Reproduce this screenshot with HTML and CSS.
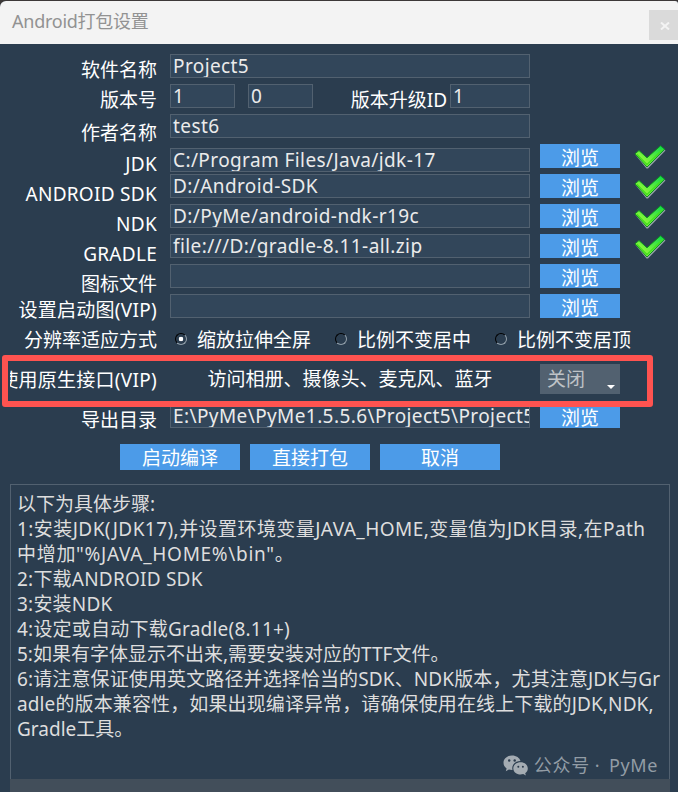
FILE: index.html
```html
<!DOCTYPE html>
<html lang="zh-CN">

<head>
    <meta charset="UTF-8">
    <meta name="viewport" content="width=device-width, initial-scale=1.0">
    <title>Android打包设置</title>
    <link rel="stylesheet" href="styles.css">
</head>

<body>
    <!-- 对勾图标 -->
    <svg class="defs" width="0" height="0">
        <defs>
            <linearGradient id="green" x1="0" y1="1" x2="1" y2="0">
                <stop offset="0.3" stop-color="#86f63c" />
                <stop offset="1" stop-color="#06d84e" />
            </linearGradient>
            <symbol id="check" viewBox="0 0 32 24">
                <path d="M1.5 10 5 7.5 13 14.5 27 2.5 31.5 5.5 14 23.5 12.5 23.5Z" fill="#93a0a4" />
                <path d="M1 8.8 5 5.5 13 12.8 26.5 0.8 30.7 4.2 13 22Z" fill="url(#green)" stroke="#0f8f22" stroke-width="1" />
                <path d="M2.8 9.2 13 19.5 28.8 4.3" fill="none" stroke="#45e01f" stroke-width="1.3" />
            </symbol>
        </defs>
    </svg>

    <div class="window">
        <div class="titlebar">
            <span class="title">Android打包设置</span>
            <button type="button" class="close" aria-label="关闭窗口">
                <svg width="10" height="8" viewBox="0 0 10 8">
                    <path d="M1 0.5 9 7.5M9 0.5 1 7.5" stroke="#f3f3f3" stroke-width="2" />
                </svg>
            </button>
        </div>

        <div class="form">
            <div class="row">
                <div class="label">软件名称</div>
                <div class="field">Project5</div>
            </div>
            <div class="row">
                <div class="label">版本号</div>
                <div class="field short">1</div>
                <div class="field short minor">0</div>
                <div class="label upgrade">版本升级ID</div>
                <div class="field code">1</div>
            </div>
            <div class="row">
                <div class="label low">作者名称</div>
                <div class="field">test6</div>
            </div>
            <div class="row">
                <div class="label lower wide">JDK</div>
                <div class="field down">C:/Program Files/Java/jdk-17</div>
                <button type="button" class="btn">浏览</button>
                <svg class="check"><use href="#check" /></svg>
            </div>
            <div class="row">
                <div class="label lower wide">ANDROID SDK</div>
                <div class="field">D:/Android-SDK</div>
                <button type="button" class="btn">浏览</button>
                <svg class="check"><use href="#check" /></svg>
            </div>
            <div class="row">
                <div class="label lower wide">NDK</div>
                <div class="field">D:/PyMe/android-ndk-r19c</div>
                <button type="button" class="btn">浏览</button>
                <svg class="check"><use href="#check" /></svg>
            </div>
            <div class="row">
                <div class="label lower wide">GRADLE</div>
                <div class="field">file:///D:/gradle-8.11-all.zip</div>
                <button type="button" class="btn">浏览</button>
                <svg class="check"><use href="#check" /></svg>
            </div>
            <div class="row">
                <div class="label lower">图标文件</div>
                <div class="field"></div>
                <button type="button" class="btn">浏览</button>
            </div>
            <div class="row">
                <div class="label wide">设置启动图(VIP)</div>
                <div class="field"></div>
                <button type="button" class="btn">浏览</button>
            </div>
            <div class="row">
                <div class="label">分辨率适应方式</div>
                <div class="radios">
                    <div class="radio"><i class="dot on"></i>缩放拉伸全屏</div>
                    <div class="radio"><i class="dot"></i>比例不变居中</div>
                    <div class="radio"><i class="dot"></i>比例不变居顶</div>
                </div>
            </div>
            <div class="row api">
                <div class="label wide">使用原生接口(VIP)</div>
                <div class="desc">访问相册、摄像头、麦克风、蓝牙</div>
                <div class="select">关闭<i class="arrow"></i></div>
                <div class="mark"></div>
            </div>
            <div class="row">
                <div class="label">导出目录</div>
                <div class="field">E:\PyMe\PyMe1.5.5.6\Project5\Project5</div>
                <button type="button" class="btn">浏览</button>
            </div>
        </div>

        <div class="actions">
            <button type="button" class="btn big">启动编译</button>
            <button type="button" class="btn big">直接打包</button>
            <button type="button" class="btn big">取消</button>
        </div>

        <div class="steps">
            <p>以下为具体步骤:</p>
            <p class="env">1:安装JDK(JDK17),并设置环境变量JAVA_HOME,变量值为JDK目录,在Path</p>
            <p class="path">中增加"%JAVA_HOME%\bin"。</p>
            <p class="latin">2:下载ANDROID SDK</p>
            <p class="latin">3:安装NDK</p>
            <p class="latin">4:设定或自动下载Gradle(8.11+)</p>
            <p>5:如果有字体显示不出来,需要安装对应的TTF文件。</p>
            <p class="long">6:请注意保证使用英文路径并选择恰当的SDK、NDK版本，尤其注意JDK与Gr</p>
            <p class="long">adle的版本兼容性，如果出现编译异常，请确保使用在线上下载的JDK,NDK,</p>
            <p>Gradle工具。</p>
            <div class="watermark">
                <svg width="26" height="21" viewBox="0 0 26 21">
                    <path d="M9 0.5C4 0.5 0.5 3.7 0.5 7.8c0 2.3 1.2 4.3 3.1 5.7l-0.8 2.7 3.1-1.6c1 0.3 2 0.4 3.1 0.4h0.5c-1.3-5 2.6-8.9 8-8.9C16.7 2.9 13.3 0.5 9 0.5z" fill="#a4acb3" />
                    <path d="M17.6 7.3c-4.2 0-7.3 2.8-7.3 6.1s3.1 6.1 7.3 6.1c0.9 0 1.8-0.1 2.6-0.4l2.7 1.4-0.7-2.3c1.6-1.2 2.6-2.9 2.6-4.8 0-3.3-3.1-6.1-7.2-6.1z" fill="#a4acb3" />
                    <g fill="#2b3b4c">
                        <circle cx="6.2" cy="5.5" r="1.2" />
                        <circle cx="11.7" cy="5.5" r="1.2" />
                        <circle cx="15.3" cy="11.7" r="1" />
                        <circle cx="19.9" cy="11.7" r="1" />
                    </g>
                </svg>
                <span class="account">公众号</span>
                <span class="sep">·</span>
                <span class="name">PyMe</span>
            </div>
        </div>
        <div class="bottom"></div>
    </div>
</body>

</html>
```

FILE: styles.css
```css
body {
    margin: 0;
    background-color: #3c3838;
    overflow: hidden;
    font-family: "Noto Sans", "Noto Sans CJK SC", sans-serif;
    font-size: 19px;
    line-height: 24px;
    color: #fff;
}

.defs {
    position: absolute;
}

.window {
    margin-top: 1px;
    height: 791px;
    background-color: #2b3d4f;
    border-radius: 6px 3px 0 0;
    overflow: hidden;
}

.titlebar {
    display: flex;
    justify-content: space-between;
    height: 43px;
    background-color: #f3f3f3;
}

.title {
    padding: 8px 0 0 12px;
    font-size: 18px;
    letter-spacing: -0.25px;
    color: #929292;
}

.close {
    width: 29px;
    height: 30px;
    margin-top: 9px;
    padding: 0 0 0 2px;
    border: none;
    background-color: #dadada;
}

.form {
    padding: 10px 0 0 10px;
}

.row {
    display: flex;
    align-items: flex-start;
    height: 30px;
    white-space: nowrap;
}

.label {
    display: flex;
    justify-content: flex-end;
    width: 147px;
    margin-right: 13px;
    padding-top: 4px;
    overflow: hidden;
}

.label.low {
    padding-top: 7px;
}

.label.lower {
    padding-top: 8px;
}

.label.wide {
    letter-spacing: 0.28px;
}

.label.upgrade {
    width: 134px;
    margin-right: 3px;
}

.field {
    box-sizing: border-box;
    width: 360px;
    height: 24px;
    padding-left: 2px;
    border: 1px solid #526170;
    background-color: #32465a;
    color: #ebebeb;
    letter-spacing: 0.4px;
    line-height: 22px;
    overflow: hidden;
}

.field.short {
    width: 65px;
}

.field.minor {
    margin-left: 13px;
}

.field.code {
    width: 80px;
}

.field.down {
    margin-top: 4px;
}

.btn {
    width: 80px;
    height: 24px;
    margin-left: 10px;
    padding: 4px 0 0;
    border: none;
    background-color: #4c9be8;
    color: #fff;
    font: inherit;
    line-height: 20px;
}

.check {
    width: 32px;
    height: 24px;
    margin: 1px 0 0 14px;
}

.radios {
    display: flex;
    padding-top: 4px;
}

.radio {
    display: flex;
    align-items: center;
    width: 160px;
}

.dot {
    box-sizing: border-box;
    width: 12px;
    height: 12px;
    margin: 0 10px 2px 5px;
    border: 1px solid;
    border-color: #000 #93a0aa #93a0aa #000;
    border-radius: 50%;
}

.dot.on {
    background: radial-gradient(circle, #fff 2px, transparent 2.6px);
}

.row.api {
    position: relative;
    height: 50px;
}

.api .label {
    padding-top: 14px;
}

.desc {
    width: 360px;
    padding-top: 13px;
    text-align: center;
}

.select {
    position: relative;
    box-sizing: border-box;
    width: 80px;
    height: 30px;
    margin: 10px 0 0 10px;
    padding-left: 7px;
    background-color: #526170;
    color: #bfc3c7;
    line-height: 31px;
}

.arrow {
    position: absolute;
    right: 5px;
    bottom: 5px;
    border: 4px solid transparent;
    border-top-color: #fff;
    border-bottom: none;
}

/* 红色标记框 */
.mark {
    position: absolute;
    left: -8px;
    top: 1px;
    box-sizing: border-box;
    width: 651px;
    height: 52px;
    border: 6px solid #ff5350;
    border-radius: 3px;
}

.actions {
    display: flex;
    padding: 10px 0 14px 110px;
}

.btn.big {
    width: 120px;
    height: 26px;
    padding-top: 2px;
    line-height: 24px;
}

.steps {
    position: relative;
    box-sizing: border-box;
    width: 660px;
    height: 295px;
    margin-left: 10px;
    padding: 7px 6px 0;
    border: 1px solid #526170;
    border-bottom: none;
    color: #dedede;
    line-height: 25px;
    white-space: nowrap;
}

.steps p {
    margin: 0;
}

.steps .env {
    letter-spacing: 0.44px;
}

.steps .path {
    letter-spacing: 0.7px;
}

.steps .latin {
    letter-spacing: 0.22px;
}

.steps .long {
    letter-spacing: 0.12px;
}

.watermark {
    position: absolute;
    right: 11px;
    bottom: 1px;
    display: flex;
    align-items: center;
    font-size: 18px;
    color: #929ca5;
}

.account {
    margin-left: 5px;
    letter-spacing: 0.8px;
}

.sep {
    width: 14px;
    text-align: center;
}

.name {
    margin-left: 5px;
    letter-spacing: 0.6px;
}

.bottom {
    width: 660px;
    height: 13px;
    margin-left: 10px;
    background-color: #424e5a;
}
```
